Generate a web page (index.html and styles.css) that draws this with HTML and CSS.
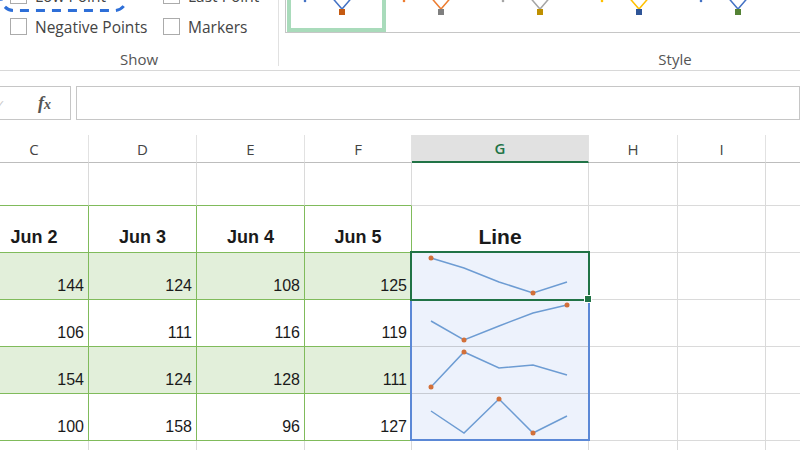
FILE: index.html
```html
<!DOCTYPE html>
<html>
<head>
<meta charset="utf-8">
<link rel="stylesheet" href="styles.css">
</head>
<body>
<div class="ribbon">
  <div class="group show">
    <div class="checks">
      <label class="chk"><span class="box"></span>Low Point</label>
      <label class="chk"><span class="box"></span>Last Point</label>
      <label class="chk"><span class="box"></span>Negative Points</label>
      <label class="chk"><span class="box"></span>Markers</label>
    </div>
    <div class="glabel">Show</div>
    <svg class="annot" width="132" height="44" viewBox="0 0 132 44"><rect x="1.5" y="1.5" width="125" height="40" rx="12" fill="none" stroke="#2e6fd8" stroke-width="3" stroke-dasharray="9 7"/></svg>
  </div>
  <div class="group style">
    <div class="gallery">
      <div class="item sel"><svg width="91" height="34" viewBox="0 0 91 34"><circle cx="14" cy="7" r="1.3" fill="#4472c4"/><polyline points="38,0 51,15 64,0" fill="none" stroke="#4472c4" stroke-width="1.5"/><rect x="48" y="15" width="6" height="6" fill="#c55a11"/></svg></div>
      <div class="item"><svg width="91" height="34" viewBox="0 0 91 34"><circle cx="14" cy="7" r="1.3" fill="#ed7d31"/><polyline points="38,0 51,15 64,0" fill="none" stroke="#ed7d31" stroke-width="1.5"/><rect x="48" y="15" width="6" height="6" fill="#7f7f7f"/></svg></div>
      <div class="item"><svg width="91" height="34" viewBox="0 0 91 34"><circle cx="14" cy="7" r="1.3" fill="#a5a5a5"/><polyline points="38,0 51,15 64,0" fill="none" stroke="#a5a5a5" stroke-width="1.5"/><rect x="48" y="15" width="6" height="6" fill="#bf9000"/></svg></div>
      <div class="item"><svg width="91" height="34" viewBox="0 0 91 34"><circle cx="14" cy="7" r="1.3" fill="#ffc000"/><polyline points="38,0 51,15 64,0" fill="none" stroke="#ffc000" stroke-width="1.5"/><rect x="48" y="15" width="6" height="6" fill="#2f5597"/></svg></div>
      <div class="item"><svg width="91" height="34" viewBox="0 0 91 34"><circle cx="14" cy="7" r="1.3" fill="#4472c4"/><polyline points="38,0 51,15 64,0" fill="none" stroke="#4472c4" stroke-width="1.5"/><rect x="48" y="15" width="6" height="6" fill="#548235"/></svg></div>
    </div>
    <div class="glabel style-label">Style</div>
  </div>
</div>

<div class="fbar">
  <div class="namebox"><span class="tick">✓</span><span class="fx">f<span class="fxx">x</span></span></div>
  <div class="finput"></div>
</div>

<div class="sheet">
  <div class="c h">C</div>
  <div class="c h">D</div>
  <div class="c h">E</div>
  <div class="c h">F</div>
  <div class="c h act">G</div>
  <div class="c h">H</div>
  <div class="c h">I</div>
  <div class="c h"></div>

  <div class="c tb"></div>
  <div class="c tb"></div>
  <div class="c tb"></div>
  <div class="c tb"></div>
  <div class="c"></div>
  <div class="c"></div>
  <div class="c"></div>
  <div class="c"></div>

  <div class="c t jun">Jun 2</div>
  <div class="c t jun">Jun 3</div>
  <div class="c t jun">Jun 4</div>
  <div class="c t jun">Jun 5</div>
  <div class="c jun line">Line</div>
  <div class="c"></div>
  <div class="c"></div>
  <div class="c"></div>

  <div class="c t fill num">144</div>
  <div class="c t fill num">124</div>
  <div class="c t fill num">108</div>
  <div class="c t fill num">125</div>
  <div class="c spark"><svg width="176" height="46" viewBox="0 0 176 46"><polyline points="19,5 52,15 87,29 121,40 155,29" fill="none" stroke="#6d9cd3" stroke-width="1.5"/><circle cx="19" cy="5" r="2.5" fill="#d2703a"/><circle cx="121" cy="40" r="2.5" fill="#d2703a"/></svg></div>
  <div class="c"></div>
  <div class="c"></div>
  <div class="c"></div>

  <div class="c t num">106</div>
  <div class="c t num">111</div>
  <div class="c t num">116</div>
  <div class="c t num">119</div>
  <div class="c spark"><svg width="176" height="46" viewBox="0 0 176 46"><polyline points="19,21 52,40 87,26 121,13 155,5" fill="none" stroke="#6d9cd3" stroke-width="1.5"/><circle cx="52" cy="40" r="2.5" fill="#d2703a"/><circle cx="155" cy="5" r="2.5" fill="#d2703a"/></svg></div>
  <div class="c"></div>
  <div class="c"></div>
  <div class="c"></div>

  <div class="c t fill num">154</div>
  <div class="c t fill num">124</div>
  <div class="c t fill num">128</div>
  <div class="c t fill num">111</div>
  <div class="c spark"><svg width="176" height="46" viewBox="0 0 176 46"><polyline points="19,40 52,5 87,21 121,18 155,28" fill="none" stroke="#6d9cd3" stroke-width="1.5"/><circle cx="19" cy="40" r="2.5" fill="#d2703a"/><circle cx="52" cy="5" r="2.5" fill="#d2703a"/></svg></div>
  <div class="c"></div>
  <div class="c"></div>
  <div class="c"></div>

  <div class="c t num">100</div>
  <div class="c t num">158</div>
  <div class="c t num">96</div>
  <div class="c t num">127</div>
  <div class="c spark"><svg width="176" height="46" viewBox="0 0 176 46"><polyline points="19,17 52,39 87,5 121,39 155,22" fill="none" stroke="#6d9cd3" stroke-width="1.5"/><circle cx="87" cy="5" r="2.5" fill="#d2703a"/><circle cx="121" cy="39" r="2.5" fill="#d2703a"/></svg></div>
  <div class="c"></div>
  <div class="c"></div>
  <div class="c"></div>

  <div class="c"></div>
  <div class="c"></div>
  <div class="c"></div>
  <div class="c"></div>
  <div class="c"></div>
  <div class="c"></div>
  <div class="c"></div>
  <div class="c"></div>

  <div class="sel-blue"></div>
  <div class="sel-green"></div>
  <div class="handle"></div>
</div>
</body>
</html>
```
FILE: styles.css
```css
* { box-sizing: border-box; }
html, body { margin: 0; padding: 0; }
body {
  width: 800px;
  height: 450px;
  overflow: hidden;
  background: #fff;
  font-family: "Open Sans", "Liberation Sans", sans-serif;
  color: #444;
}

/* ribbon */
.ribbon {
  display: flex;
  height: 71px;
  border-bottom: 1px solid #d8d8d8;
  overflow: hidden;
}
.group { display: flex; flex-direction: column; flex: none; }
.show {
  position: relative;
  width: 279px;
  height: 66px;
  border-right: 1px solid #e1e1e1;
}
.checks {
  display: grid;
  grid-template-columns: 153px auto;
  grid-auto-rows: 31px;
  margin-top: -20px;
  padding-left: 10px;
}
.chk {
  display: flex;
  align-items: center;
  gap: 8px;
  font-size: 15.5px;
  color: #444;
  white-space: nowrap;
}
.box {
  flex: none;
  width: 17px;
  height: 17px;
  border: 1px solid #ababab;
  background: #fff;
}
.glabel {
  height: 20px;
  line-height: 20px;
  text-align: center;
  font-size: 15px;
  color: #555;
  margin-top: 7px;
}
.annot {
  position: absolute;
  left: 0;
  top: -31px;
}
.style { width: 792px; }
.gallery {
  display: flex;
  height: 43px;
  margin-top: -10px;
  margin-left: 6px;
  padding-left: 1px;
  border-left: 1px solid #c6c6c6;
  border-bottom: 1px solid #c6c6c6;
}
.item {
  flex: none;
  width: 99px;
  height: 42px;
  border: 4px solid transparent;
}
.item svg { display: block; }
.item.sel { border-color: #a9dbbb; }
.style-label { margin-top: 16px; }

/* formula bar */
.fbar {
  display: flex;
  gap: 5px;
  height: 34px;
  margin-top: 15px;
  margin-left: -10px;
}
.namebox {
  flex: none;
  width: 81px;
  display: flex;
  align-items: center;
  padding-left: 6px;
  gap: 33px;
  border: 1px solid #c6c6c6;
  border-left: none;
}
.tick { font-size: 11px; color: #c8c8c8; }
.fx {
  font-family: "Liberation Serif", serif;
  font-style: italic;
  font-weight: bold;
  font-size: 18px;
  color: #555;
}
.fxx { font-size: 14px; }
.finput {
  flex: 1;
  border: 1px solid #c6c6c6;
}

/* sheet */
.sheet {
  position: relative;
  display: grid;
  grid-template-columns: 109px 108px 108px 107px 177px 89px 88px 120px;
  grid-template-rows: 28px 43px 47px 47px 47px 47px 47px 47px;
  margin-top: 15px;
  margin-left: -20px;
  font-family: "Liberation Sans", sans-serif;
  color: #1a1a1a;
}
.c {
  border-right: 1px solid #dadada;
  border-bottom: 1px solid #dadada;
}
.h {
  display: flex;
  align-items: center;
  justify-content: center;
  font-family: "Open Sans", sans-serif;
  font-size: 15px;
  color: #444;
  border-right-color: #e2e2e2;
  border-bottom-color: #bdbdbd;
}
.h.act {
  background: #e1e1e1;
  color: #217346;
  font-weight: 600;
  border-bottom: 2px solid #217346;
}
.tb { border-bottom-color: #80bb5b; }
.t {
  border-right-color: #80bb5b;
  border-bottom-color: #80bb5b;
}
.fill { background: #e2efda; }
.jun {
  display: flex;
  align-items: flex-end;
  justify-content: center;
  padding-bottom: 4px;
  font-size: 18px;
  line-height: 22px;
  font-weight: bold;
}
.line { font-size: 21px; }
.num {
  display: flex;
  align-items: flex-end;
  justify-content: flex-end;
  padding: 0 4px 3px 0;
  font-size: 16px;
  line-height: 20px;
}
.spark {
  background: #edf2fc;
  border-bottom-color: #c7cbd3;
}
.spark svg { display: block; }

.sel-green {
  position: absolute;
  left: 430px;
  top: 116px;
  width: 180px;
  height: 50px;
  border: 2px solid #217346;
}
.sel-blue {
  position: absolute;
  left: 430px;
  top: 164px;
  width: 180px;
  height: 142px;
  border: 2px solid #5b88d6;
}
.handle {
  position: absolute;
  left: 604px;
  top: 160px;
  width: 8px;
  height: 8px;
  background: #217346;
  border: 1px solid #fff;
}
```
